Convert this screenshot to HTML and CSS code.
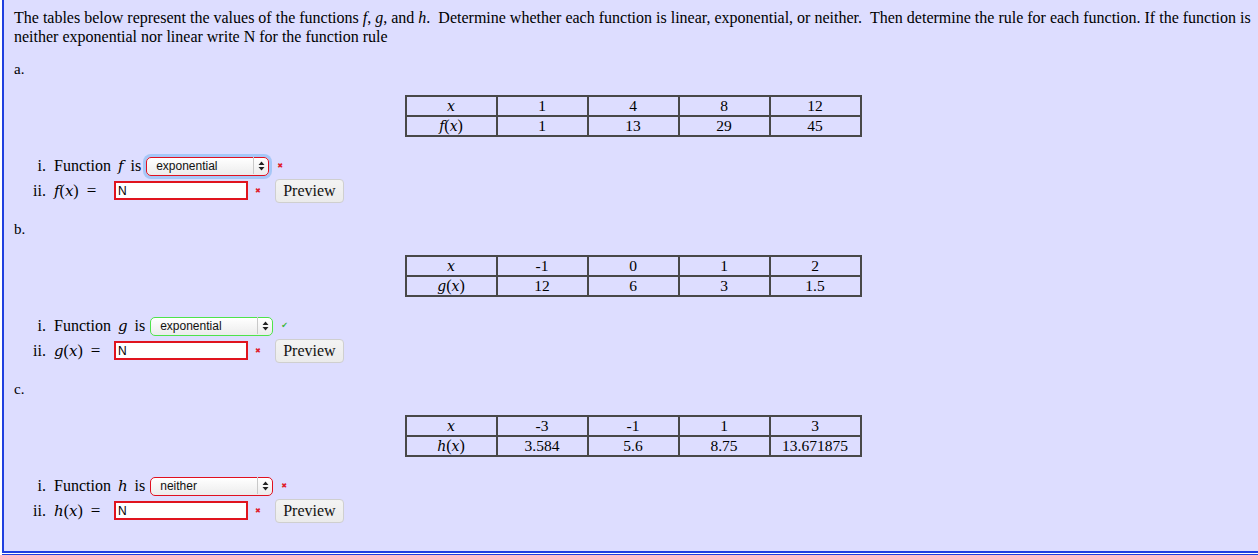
FILE: index.html
```html
<!DOCTYPE html>
<html>
<head>
<meta charset="utf-8">
<link rel="stylesheet" href="styles.css">
</head>
<body>
<div class="problem">
  <p class="intro">The tables below represent the values of the functions <i>f</i>, <i>g</i>, and <i>h</i>. &nbsp;Determine whether each function is linear, exponential, or neither. &nbsp;Then determine the rule for each function. If the function is neither exponential nor linear write N for the function rule</p>

  <div class="part">
    <div class="label">a.</div>
    <table class="vals">
      <tr><td class="m">x</td><td>1</td><td>4</td><td>8</td><td>12</td></tr>
      <tr><td class="m">f<span class="up">(</span>x<span class="up">)</span></td><td>1</td><td>13</td><td>29</td><td>45</td></tr>
    </table>
    <div class="qs">
      <div class="q">
        <span class="num">i.</span>
        <span class="txt">Function <span class="m fn">f</span> is</span>
        <span class="sel bad focus"><select><option>exponential</option></select><span class="arrows"><svg width="7" height="10" viewBox="0 0 7 10"><path d="M0.5 4 L3.5 0.5 L6.5 4 Z M0.5 6 L3.5 9.5 L6.5 6 Z" fill="#222"/></svg></span></span>
        <span class="x">&#10006;</span>
      </div>
      <div class="q">
        <span class="num">ii.</span>
        <span class="txt m lhs">f<span class="up">(</span>x<span class="up">)</span><span class="up eq">=</span></span>
        <input class="ans" type="text" value="N">
        <span class="x x2">&#10006;</span>
        <button class="prev">Preview</button>
      </div>
    </div>
  </div>

  <div class="part">
    <div class="label">b.</div>
    <table class="vals">
      <tr><td class="m">x</td><td>-1</td><td>0</td><td>1</td><td>2</td></tr>
      <tr><td class="m">g<span class="up">(</span>x<span class="up">)</span></td><td>12</td><td>6</td><td>3</td><td>1.5</td></tr>
    </table>
    <div class="qs">
      <div class="q">
        <span class="num">i.</span>
        <span class="txt">Function <span class="m fn">g</span> is</span>
        <span class="sel good"><select><option>exponential</option></select><span class="arrows"><svg width="7" height="10" viewBox="0 0 7 10"><path d="M0.5 4 L3.5 0.5 L6.5 4 Z M0.5 6 L3.5 9.5 L6.5 6 Z" fill="#222"/></svg></span></span>
        <span class="ok">&#10004;</span>
      </div>
      <div class="q">
        <span class="num">ii.</span>
        <span class="txt m lhs">g<span class="up">(</span>x<span class="up">)</span><span class="up eq">=</span></span>
        <input class="ans" type="text" value="N">
        <span class="x x2">&#10006;</span>
        <button class="prev">Preview</button>
      </div>
    </div>
  </div>

  <div class="part">
    <div class="label">c.</div>
    <table class="vals">
      <tr><td class="m">x</td><td>-3</td><td>-1</td><td>1</td><td>3</td></tr>
      <tr><td class="m">h<span class="up">(</span>x<span class="up">)</span></td><td>3.584</td><td>5.6</td><td>8.75</td><td>13.671875</td></tr>
    </table>
    <div class="qs">
      <div class="q">
        <span class="num">i.</span>
        <span class="txt">Function <span class="m fn">h</span> is</span>
        <span class="sel bad"><select><option>neither</option></select><span class="arrows"><svg width="7" height="10" viewBox="0 0 7 10"><path d="M0.5 4 L3.5 0.5 L6.5 4 Z M0.5 6 L3.5 9.5 L6.5 6 Z" fill="#222"/></svg></span></span>
        <span class="x">&#10006;</span>
      </div>
      <div class="q">
        <span class="num">ii.</span>
        <span class="txt m lhs">h<span class="up">(</span>x<span class="up">)</span><span class="up eq">=</span></span>
        <input class="ans" type="text" value="N">
        <span class="x x2">&#10006;</span>
        <button class="prev">Preview</button>
      </div>
    </div>
  </div>
</div>
<div class="next"></div>
</body>
</html>
```

FILE: styles.css
```css
html, body {
  margin: 0;
  padding: 0;
  background: #ffffff;
}
body {
  font-family: "Liberation Serif", "Times New Roman", serif;
  font-size: 16px;
  color: #000;
}
.problem {
  margin-left: 2px;
  background: #ddddff;
  border-left: 2px solid #1f3fe0;
  border-bottom: 2px solid #1f3fe0;
  padding: 8px 2px 28px 10px;
}
.intro {
  margin: 0;
  line-height: 19px;
  font-size: 16px;
}
.part {
  margin-top: 14px;
}
.part + .part {
  margin-top: 17px;
}
.label {
  line-height: 19px;
  font-size: 15px;
}
.vals {
  margin: 16px auto 0 auto;
  border-collapse: collapse;
  border: 2px solid #484848;
  position: relative;
  left: -2px;
}
.vals td {
  border: 2px solid #484848;
  width: 89px;
  height: 18px;
  padding: 0;
  text-align: center;
  line-height: 18px;
  font-size: 15.5px;
}
.m {
  font-style: italic;
  font-family: "DejaVu Serif", "Liberation Serif", serif;
  font-size: 14px;
}
.vals td.m { font-size: 14px; }
.up {
  font-style: normal;
  font-family: "Liberation Serif", serif;
  font-size: 16px;
}
.qs {
  margin-top: 16px;
}
.q {
  display: flex;
  align-items: center;
  height: 25px;
}
.num {
  width: 32px;
  text-align: right;
  margin-right: 8px;
  font-size: 16px;
}
.txt {
  font-size: 16px;
  white-space: pre;
}
.txt.m { font-size: 15px; }
.lhs { width: 60px; }
.fn { font-size: 15px; margin: 0 3px; }
.eq { margin-left: 8px; font-size: 17px; }
.sel {
  position: relative;
  display: inline-block;
  margin-left: 5px;
  height: 19px;
}
.sel select {
  -webkit-appearance: none;
  appearance: none;
  box-sizing: border-box;
  width: 123px;
  height: 19px;
  border: 1px solid #e01020;
  border-radius: 5px;
  background: linear-gradient(#ffffff, #ececec);
  font-family: "Liberation Sans", Arial, sans-serif;
  font-size: 12px;
  padding: 0 0 0 9px;
  color: #111;
  outline: none;
}
.sel.good select { border-color: #4ee34a; }
.sel.focus select { box-shadow: 0 0 0 3px #a6c7f7; }
.arrows {
  position: absolute;
  right: 1px;
  top: 1px;
  bottom: 1px;
  width: 14px;
  border-left: 1px solid #c9c9c9;
  display: flex;
  align-items: center;
  justify-content: center;
  pointer-events: none;
}
.x {
  color: #e0202a;
  font-family: "DejaVu Sans", sans-serif;
  font-size: 7px;
  margin-left: 8px;
}
.x2 { margin-left: 7px; }
.ok {
  color: #3ab83a;
  font-family: "DejaVu Sans", sans-serif;
  font-size: 8px;
  margin-left: 8px;
}
.ans {
  box-sizing: border-box;
  width: 134px;
  height: 19px;
  margin: 0;
  border: 2px solid #e0141e;
  background: #fff;
  font-family: "Liberation Sans", Arial, sans-serif;
  font-size: 12px;
  padding: 0 2px;
  outline: none;
}
.prev {
  margin-left: 14px;
  box-sizing: border-box;
  width: 69px;
  height: 24px;
  background: linear-gradient(#f3f3f3, #ebebeb);
  border: 1px solid #cfcfcf;
  border-radius: 4px;
  font-family: "Liberation Serif", serif;
  font-size: 16px;
  padding: 0;
  color: #111;
}
.next {
  margin: 1px 0 0 2px;
  height: 10px;
  border-top: 2px solid #1f3fe0;
  border-left: 2px solid #1f3fe0;
  background: #eef8ee;
}
```
